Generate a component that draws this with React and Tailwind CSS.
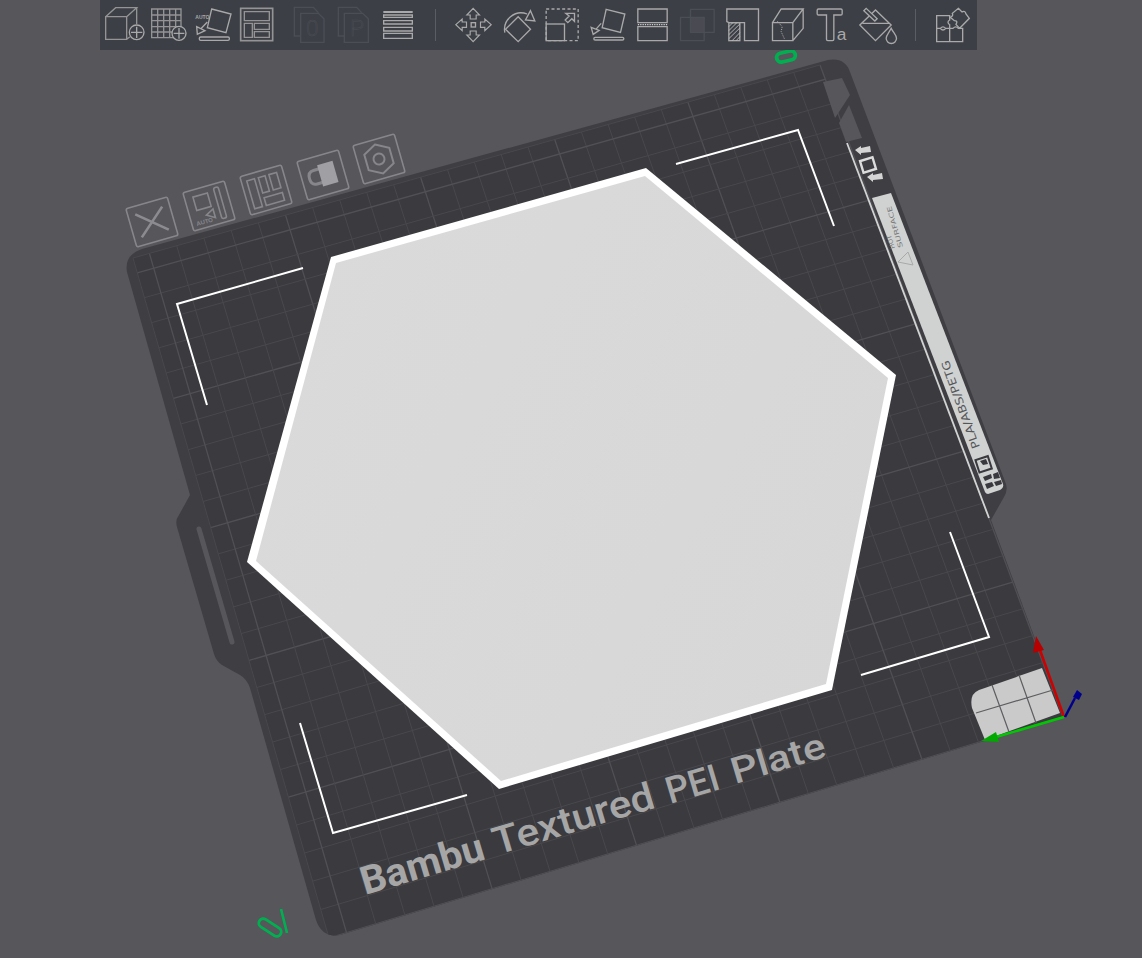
import React from 'react';

// plate quad: (u,v) in mm, origin at the axes corner
const makeHomography = (p0, p1, p2, p3) => {
  const dx1 = p1[0] - p2[0], dx2 = p3[0] - p2[0], sx = p0[0] - p1[0] + p2[0] - p3[0];
  const dy1 = p1[1] - p2[1], dy2 = p3[1] - p2[1], sy = p0[1] - p1[1] + p2[1] - p3[1];
  const den = dx1 * dy2 - dx2 * dy1;
  const g = (sx * dy2 - dx2 * sy) / den;
  const h = (dx1 * sy - sx * dy1) / den;
  const a = p1[0] - p0[0] + g * p1[0], b = p3[0] - p0[0] + h * p3[0];
  const d = p1[1] - p0[1] + g * p1[1], e = p3[1] - p0[1] + h * p3[1];
  return (u, v) => {
    const s = u / 256, t = v / 256, w = g * s + h * t + 1;
    return [(a * s + b * t + p0[0]) / w, (d * s + e * t + p0[1]) / w];
  };
};

const project = makeHomography([1063, 717], [329, 938], [133, 258], [820, 65]);
const ticks = [];
for (let i = 0; i <= 250; i += 10) ticks.push(i);
ticks.push(256);

const PLATE = 'M142 249 L828 60 Q845 57 850 72 L1006 484 Q1008 491 1004 497 L991 520 L1064 717 L340 935 Q322 938 316 920 L250 688 Q247 679 240 675 L222 665 Q216 661 214 654 L177 527 Q175 520 179 515 L190 495 L127 272 Q124 255 142 249 Z';

const STROKE = '#a9a9a9';
const DIM = '#4b4e55';
const WORDS = [
  { text: 'Bambu', x: 365, y: 895, size: 39, weight: 700, length: 127 },
  { text: 'Textured', x: 497, y: 855, size: 38, weight: 500, length: 167 },
  { text: 'PEI', x: 670, y: 804, size: 37, weight: 500, length: 54 },
  { text: 'Plate', x: 735, y: 784, size: 36, weight: 500, length: 97 },
];

const Icon = ({ left, width = 44, x0, className, children }) => (
  <svg
    className={`block shrink-0 ${className || ''}`}
    width={width}
    height="50"
    viewBox={`${(left - x0) * 3} 0 ${width * 3} 150`}
    fill="none"
    stroke={STROKE}
    strokeWidth="4"
  >
    {children}
  </svg>
);

const Plus = ({ cx, cy, r }) => (
  <g>
    <circle cx={cx} cy={cy} r={r} fill="#3c3f46" />
    <path d={`M${cx} ${cy - r + 5}V${cy + r - 5}M${cx - r + 5} ${cy}H${cx + r - 5}`} />
  </g>
);

const Separator = ({ className }) => <div className={`w-px h-[32px] bg-[#5a5d64] ${className}`} />;

const Toolbar = () => (
  <div className="relative z-10 ml-[100px] w-[877px] h-[50px] flex items-center pl-[2px] bg-[#3c3f46]">
    <Icon left={102} x0={100}>
      <path d="M17 50H80V118H17ZM17 50L47 23H110L80 50M110 23V72M80 118L90 110" stroke="#949494" />
      <Plus cx={110} cy={97} r={22} />
    </Icon>
    <Icon left={146} x0={100}>
      <path d="M155 27H243V113H155ZM173 27V113M191 27V113M209 27V113M227 27V113M155 45H243M155 62H243M155 80H243M155 96H243" stroke="#949494" />
      <Plus cx={237} cy={100} r={21} />
    </Icon>
    <Icon left={190} x0={100}>
      <text x="286" y="56" fontSize="15" fontWeight="700" fontFamily="Liberation Sans, sans-serif" fill={STROKE} stroke="none">AUTO</text>
      <path d="M335 27L393 42L378 98L322 83Z" />
      <path d="M290 80L315 92L292 103ZM304 85L322 66" />
      <rect x="298" y="111" width="90" height="10" rx="4" />
    </Icon>
    <Icon left={234} x0={100}>
      <rect x="422" y="25" width="96" height="97" stroke="#949494" strokeWidth="5" />
      <path d="M433 35H508V62H433ZM433 70H457V112H433ZM463 70H508V88H463ZM463 95H508V112H463Z" stroke="#949494" />
    </Icon>
    <Icon left={288} x0={100} className="ml-[10px]">
      <path d="M602 108H583V22H640L655 38M602 40H655L672 56V127H602Z" stroke={DIM} />
      <text x="618" y="108" fontSize="68" fontWeight="300" fontFamily="Roboto, sans-serif" fill="none" stroke={DIM} strokeWidth="1.5">0</text>
    </Icon>
    <Icon left={332} x0={100}>
      <path d="M733 108H715V22H770L785 38M733 40H788L805 56V127H733Z" stroke={DIM} />
      <text x="750" y="108" fontSize="68" fontWeight="300" fontFamily="Roboto, sans-serif" fill="none" stroke={DIM} strokeWidth="1.5">P</text>
    </Icon>
    <Icon left={376} x0={100}>
      <rect x="850" y="33" width="88" height="6" fill={STROKE} stroke="none" />
      <path d="M851 45H937V52H851ZM851 62H937V72H851ZM851 82H937V93H851ZM851 100H937V115H851Z" />
    </Icon>
    <Separator className="ml-[15px] mr-[14.5px]" />
    <Icon left={450.5} width={45} x0={100}>
      <path d="M1118 25L1137 45H1127V57H1109V45H1099ZM1118 125L1137 105H1127V93H1109V105H1099ZM1066 74L1085 57V66H1098V82H1085V92ZM1172 74L1153 57V66H1140V82H1153V92Z" strokeWidth="3.5" />
      <rect x="1112" y="68" width="13" height="13" />
    </Icon>
    <Icon left={495.5} width={45} x0={100}>
      <path d="M1213 98A50 50 0 0 1 1280 42" />
      <path d="M1290 32L1303 63L1275 60Z" />
      <path d="M1253 50L1290 88L1253 125L1215 88Z" />
    </Icon>
    <Icon left={540.5} width={45} x0={540}>
      <rect x="17" y="27" width="96" height="95" strokeDasharray="9 7" />
      <rect x="17" y="72" width="55" height="50" />
      <path d="M76 40H102V64L94 56L82 68L74 60L86 48Z" />
    </Icon>
    <Icon left={585.5} width={45} x0={540}>
      <path d="M197 28L253 42L240 97L185 83Z" />
      <path d="M152 82L176 91L158 103ZM166 88L182 70" />
      <rect x="160" y="112" width="90" height="8" rx="4" />
    </Icon>
    <Icon left={630.5} width={45} x0={540}>
      <path d="M292 27H380V68H292ZM292 80H380V122H292Z" />
      <path d="M292 74H380" stroke="#cfcfcf" strokeDasharray="4 3" />
    </Icon>
    <Icon left={675.5} width={45} x0={540}>
      <rect x="450" y="52" width="41" height="45" fill="#4a4b52" stroke="none" />
      <path d="M450 28H521V97H450ZM420 52H491V122H420Z" stroke={DIM} />
    </Icon>
    <Icon left={720.5} width={45} x0={540}>
      <path d="M559 27H654V122H612V68H565L559 65Z" />
      <rect x="565" y="68" width="33" height="54" />
      <path d="M565 80L577 68M565 92L589 68M565 104L598 72M565 116L598 84M575 122L598 98M587 122L598 110" strokeWidth="2.5" stroke="#c4c4c4" />
    </Icon>
    <Icon left={765.5} width={45} x0={540}>
      <path d="M696 68H757V122H696ZM696 68L722 27H788L757 68M788 27V85L757 122" />
      <path d="M710 63L725 80L722 95L732 117" strokeDasharray="3 3" strokeWidth="3" />
    </Icon>
    <Icon left={810.5} width={45} x0={540}>
      <path d="M834 27H901Q905 27 905 31V41Q905 45 901 45H880V118Q880 122 876 122H862Q858 122 858 118V45H834Q830 45 830 41V31Q830 27 834 27Z" />
      <text x="889" y="120" fontSize="52" fontFamily="Liberation Sans, sans-serif" fill={STROKE} stroke="none">a</text>
    </Icon>
    <Icon left={855.5} width={45} x0={540}>
      <path d="M958 75L1005 30L1052 75L1005 122ZM966 70H1048" />
      <path d="M970 32L977 25L1010 56L1003 63Z" fill="#3c3f46" />
      <path d="M1052 85C1060 100 1068 105 1068 115A15 15 0 0 1 1037 115C1037 105 1045 100 1052 85Z" fill="#3c3f46" />
    </Icon>
    <Separator className="ml-[14px] mr-[15px]" />
    <Icon left={930} x0={540}>
      <path d="M1187 47H1226V60Q1216 66 1226 74V85H1214Q1206 76 1198 85H1187ZM1187 85H1198Q1206 95 1214 85H1226V125H1187ZM1226 85H1236Q1244 76 1252 85H1265V125H1226Z" />
      <path d="M1252 25L1263 36Q1272 30 1275 42L1285 55L1256 85L1245 73Q1252 62 1240 62L1228 52Q1238 48 1234 40Z" fill="#3c3f46" />
    </Icon>
  </div>
);

const Scene = () => (
  <svg className="absolute inset-0" width="1142" height="958" viewBox="0 0 1142 958" fill="none">
    <defs>
      <clipPath id="plate-clip"><path d={PLATE} /></clipPath>
      <linearGradient id="hex-fill" x1="250" y1="300" x2="890" y2="650" gradientUnits="userSpaceOnUse">
        <stop offset="0" stopColor="#dadada" />
        <stop offset="1" stopColor="#d7d7d7" />
      </linearGradient>
    </defs>

    {/* plate body and grid */}
    <path d={PLATE} fill="#3e3e43" />
    <g clipPath="url(#plate-clip)">
      <polygon
        points={[project(0, 0), project(256, 0), project(256, 256), project(0, 256)].map((p) => p.join(',')).join(' ')}
        fill="#3a3a3f"
      />
      {ticks.map((t) => {
        const major = t % 50 === 0;
        const a = project(t, 0), b = project(t, 256), c = project(0, t), d = project(256, t);
        return (
          <g key={t} stroke={major ? '#505055' : '#48484d'} strokeWidth={major ? 1.3 : 1}>
            <line x1={a[0]} y1={a[1]} x2={b[0]} y2={b[1]} />
            <line x1={c[0]} y1={c[1]} x2={d[0]} y2={d[1]} />
          </g>
        );
      })}
    </g>

    {/* top right cut-outs */}
    <path d="M823 82L842 78L850 95L835 118Z" fill="#56565b" />
    <path d="M849 105L862 138L846 142L839 123Z" fill="#56565b" />

    {/* strip on the right */}
    <path d="M847 143L989 518" stroke="#d2d4d3" strokeWidth="1.8" />
    <path d="M872 198L891 193L1003 484Q1004 488 1000 490L988 494Q986 494 985 492Z" fill="#d0d2d1" />
    <path d="M855 150L861 146V148L870 146L871 152L861 153V155Z" fill="#d4d4d4" />
    <path d="M867 177L873 173V175L882 173L883 179L873 180V182Z" fill="#d4d4d4" />
    <rect x="861.5" y="159" width="13" height="12" transform="rotate(-17 868 165)" stroke="#dcdcdc" strokeWidth="2.4" />
    <text transform="translate(895 248) rotate(-108)" fontSize="6.5" textLength="14" lengthAdjust="spacingAndGlyphs" fontFamily="DejaVu Sans, sans-serif" fill="#77797a">HOT</text>
    <text transform="translate(903 247) rotate(-106)" fontSize="6.5" textLength="43" lengthAdjust="spacingAndGlyphs" fontFamily="DejaVu Sans, sans-serif" fill="#77797a">SURFACE</text>
    <path d="M908 252L898 262L913 265Z" stroke="#a8aaaa" />
    <text transform="translate(980 447) rotate(-110)" fontSize="11" textLength="93" lengthAdjust="spacingAndGlyphs" fontFamily="DejaVu Sans, sans-serif" fill="#55565a">PLA/ABS/PETG</text>
    <rect x="977" y="458" width="13" height="13" transform="rotate(-18 983 464)" stroke="#3a3a3e" strokeWidth="2" />
    <path d="M980 461L986 459L988 464L983 465Z" fill="#3a3a3e" />
    <path d="M983 477L991 474L992 478L985 481ZM993 474L998 472L1000 478L994 479ZM985 484L992 482L994 486L987 489ZM994 482L1001 480L1002 484L996 486Z" fill="#3a3a3e" />

    {/* handle slot */}
    <path d="M199 529L232 642" stroke="#56565b" strokeWidth="5" strokeLinecap="round" />

    {/* hexagon */}
    <polygon points="331,257 646,168 896,375 832,690 499,789 247,562" fill="#ffffff" />
    <polygon points="336,263 645,176 888,378 826,684 501,781 256,561" fill="url(#hex-fill)" />

    {/* corner brackets */}
    <g stroke="#ffffff" strokeWidth="2">
      <path d="M303 268L177 304L207 405" />
      <path d="M676 164L798 130L834 226" />
      <path d="M950 532L989 637L861 675" />
      <path d="M300 723L333 833L467 795" />
    </g>

    {/* plate name */}
    {WORDS.map((w) => (
      <text
        key={w.text}
        transform={`translate(${w.x} ${w.y}) rotate(-16.6)`}
        fontSize={w.size}
        fontWeight={w.weight}
        textLength={w.length}
        lengthAdjust="spacingAndGlyphs"
        fontFamily="Roboto, sans-serif"
        fill="#a6a6a6"
      >
        {w.text}
      </text>
    ))}

    {/* buttons sitting on the plate */}
    <g stroke="#87878b" strokeWidth="1.6">
      <g transform="translate(152 222) rotate(-16)">
        <rect x="-21.5" y="-20" width="43" height="40" rx="2" />
        <path d="M-14 -12L14 12M14 -12L-14 12" strokeWidth="2.6" stroke="#8c8c90" />
      </g>
      <g transform="translate(209 206) rotate(-16)">
        <rect x="-21.5" y="-20" width="43" height="40" rx="2" />
        <path d="M-13 -13H2V1H-13Z" />
        <rect x="9" y="-16" width="5" height="32" rx="2" />
        <path d="M-5 8L3 4V13Z" />
        <text x="-17" y="16" fontSize="6" fontWeight="700" fontFamily="Liberation Sans, sans-serif" fill="#87878b" stroke="none">AUTO</text>
      </g>
      <g transform="translate(266 190) rotate(-16)">
        <rect x="-21.5" y="-20" width="43" height="40" rx="2" />
        <path d="M-16 -14H-8V15H-16ZM-4 -14H3V2H-4ZM7 -14H15V2H7ZM-4 7H15V15H-4Z" />
      </g>
      <g transform="translate(323 175) rotate(-16)">
        <rect x="-21.5" y="-20" width="43" height="40" rx="2" />
        <path d="M-1 -7H-8Q-14 -7 -14 0Q-14 7 -8 7H-1" strokeWidth="3" />
        <rect x="-3" y="-11" width="16" height="22" fill="#a0a0a4" stroke="none" />
      </g>
      <g transform="translate(379 159) rotate(-16)">
        <rect x="-21.5" y="-20" width="43" height="40" rx="2" />
        <path d="M0 -15L13 -8V8L0 15L-13 8V-8Z" strokeWidth="2" />
        <circle cx="0" cy="0" r="5.5" strokeWidth="2" />
      </g>
    </g>

    {/* home corner patch and axes */}
    <path d="M979 690L1042 668L1060 713L985 740L972 708Q969 694 979 690Z" fill="#c9cac9" />
    <path d="M976 713L1053 690M992 685L1009 732M1019 675L1036 723" stroke="#5e5e62" strokeWidth="1.2" />
    <path d="M1064 717L1040 650" stroke="#d00000" strokeWidth="2.5" />
    <path d="M1036 636L1044 650L1033 653Z" fill="#b80000" />
    <path d="M1064 717L996 737" stroke="#00c800" strokeWidth="2.5" />
    <path d="M981 741L996 732L999 742Z" fill="#00a800" />
    <path d="M1065 717L1075 698" stroke="#00008c" strokeWidth="2.5" />
    <path d="M1077 690L1082 694L1079 700L1073 697Z" fill="#00008c" />

    {/* printer marks */}
    <rect x="776.5" y="52" width="19" height="9" rx="4.5" transform="rotate(-13 786 56.5)" stroke="#00b050" strokeWidth="3.8" />
    <rect x="257.5" y="923" width="25" height="9" rx="4.5" transform="rotate(33 270 927.5)" stroke="#00b050" strokeWidth="2.8" />
    <path d="M281 909L287 933" stroke="#00b050" strokeWidth="2.6" />
  </svg>
);

const App = () => (
  <div className="relative w-[1142px] h-[958px] overflow-hidden bg-[#56565b]">
    <Scene />
    <Toolbar />
  </div>
);

export default App;
